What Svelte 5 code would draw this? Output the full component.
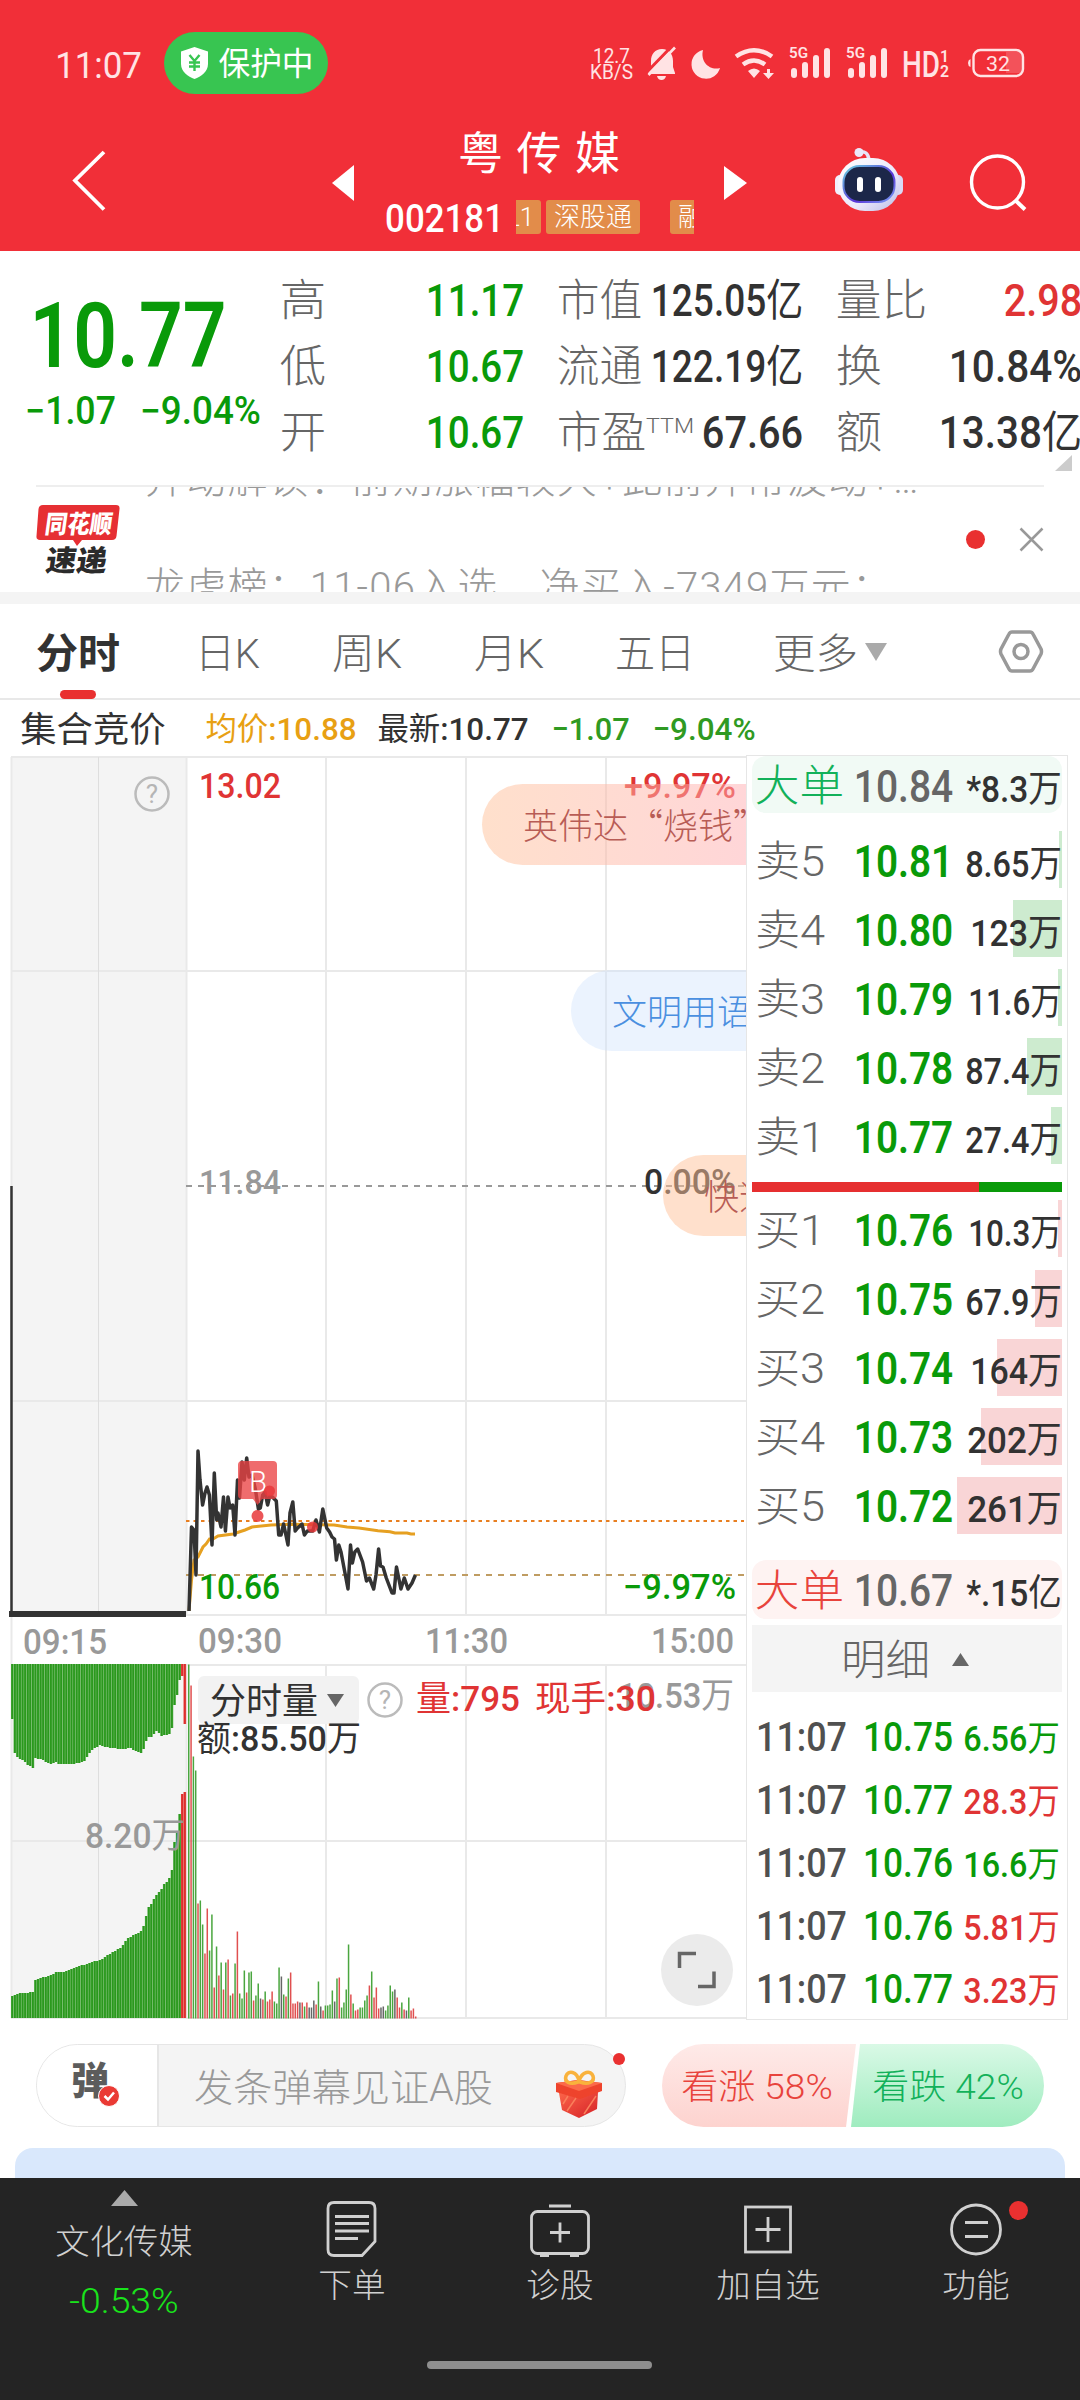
<script lang="ts">
  type Level = { label: string; price: string; qty: string; w: number; bar: number };

  const stats = [
    [
      { label: "高", lw: 42, value: "11.17", w: 94, cls: "green" },
      { label: "低", lw: 42, value: "10.67", w: 94, cls: "green" },
      { label: "开", lw: 42, value: "10.67", w: 94, cls: "green" }
    ],
    [
      { label: "市值", lw: 81, value: "125.05亿", w: 148, cls: "dark" },
      { label: "流通", lw: 81, value: "122.19亿", w: 148, cls: "dark" },
      { label: "市盈", lw: 85, value: "67.66", w: 97, cls: "dark", sup: "TTM" }
    ],
    [
      { label: "量比", lw: 87, value: "2.98", w: 74, cls: "red" },
      { label: "换", lw: 42, value: "10.84%", w: 129, cls: "dark" },
      { label: "额", lw: 42, value: "13.38亿", w: 139, cls: "dark" }
    ]
  ];

  const tabs = [
    { name: "分时", w: 80 },
    { name: "日K", w: 61 },
    { name: "周K", w: 66 },
    { name: "月K", w: 66 },
    { name: "五日", w: 76 },
    { name: "更多", w: 81 }
  ];
  let active = "分时";

  const sells: Level[] = [
    { label: "卖5", price: "10.81", qty: "8.65万", w: 93, bar: 3 },
    { label: "卖4", price: "10.80", qty: "123万", w: 88, bar: 49 },
    { label: "卖3", price: "10.79", qty: "11.6万", w: 90, bar: 4 },
    { label: "卖2", price: "10.78", qty: "87.4万", w: 93, bar: 35 },
    { label: "卖1", price: "10.77", qty: "27.4万", w: 93, bar: 11 }
  ];
  const buys: Level[] = [
    { label: "买1", price: "10.76", qty: "10.3万", w: 90, bar: 4 },
    { label: "买2", price: "10.75", qty: "67.9万", w: 93, bar: 27 },
    { label: "买3", price: "10.74", qty: "164万", w: 88, bar: 65 },
    { label: "买4", price: "10.73", qty: "202万", w: 91, bar: 81 },
    { label: "买5", price: "10.72", qty: "261万", w: 91, bar: 105 }
  ];
  const trades = [
    { price: "10.75", qty: "6.56万", cls: "green" },
    { price: "10.77", qty: "28.3万", cls: "red" },
    { price: "10.76", qty: "16.6万", cls: "green" },
    { price: "10.76", qty: "5.81万", cls: "red" },
    { price: "10.77", qty: "3.23万", cls: "red" }
  ];

  const priceLine =
    "189,1611 191.5,1527 194,1530 196,1575 198,1451 200,1480 202.6,1505 205,1493 207,1487 209.4,1495 212,1545 214.3,1473 216.7,1520 218,1513 221,1527 223.5,1497 225.4,1531 228,1497 230,1508 232.7,1505 235,1535 237.5,1480 239.5,1498 242,1462 244.3,1480 246.7,1458 249,1477 252,1475 255.5,1490 258.4,1509 260.3,1508 262.7,1495 265,1492 267.6,1505 269.5,1497 272.4,1497 276.3,1501 278.7,1535 281,1535 283.6,1524 288,1545 290,1513 292.8,1502 295.2,1531 297.6,1528 302,1524 304.4,1535 307.3,1531 312.7,1531 316,1520 319.4,1532 322.8,1509 326.7,1528 329.6,1532 332,1537 334.5,1539 336.4,1560 338.8,1545 341,1552 348,1589 350.5,1545 352.4,1563 354.8,1552 357.7,1549 362.6,1562 366.5,1581 369.4,1578 373.7,1589 376,1575 378.6,1549 380.5,1566 383,1567 386.3,1578 392,1593 394,1593 396.5,1567 400.9,1589 404.3,1578 408,1589 412,1583 415.4,1575";
  const avgLine =
    "189,1611 191.5,1580 194,1560 198,1557 203,1547 206,1544 209.5,1539 213,1539 218,1536 233,1534 245,1530 252,1527 271,1525 291,1524.3 334,1525 347,1527 359,1528 378,1530.7 390,1531.7 395,1533 407,1533 411,1534 415,1534";

  // call auction volume: [x, y] outlines, upper half hangs from the top
  const upper = [[11, 1703], [14, 1752], [17, 1757], [22, 1760], [28, 1765], [32.5, 1768], [35, 1758], [40, 1759], [46, 1762], [51, 1764], [56, 1762], [59, 1764], [70, 1764], [80, 1763], [85, 1760], [88, 1755], [91, 1750], [95.5, 1748], [99, 1745], [104, 1747], [121, 1749], [131, 1748], [133, 1750], [141, 1753], [144.5, 1747], [147, 1737], [152, 1737], [155, 1731], [158, 1732], [161, 1736], [170, 1734], [172, 1727], [174.5, 1702], [177.5, 1693], [180, 1676], [182, 1676], [185, 1733]];
  const lower = [[11, 1996], [17, 1994], [22, 1993], [33, 1992], [34, 1981], [41, 1978], [53, 1974], [56, 1972], [63, 1972], [70, 1969], [80, 1966], [92, 1962], [102, 1959], [111, 1953], [121, 1947], [128, 1938], [133, 1935], [140, 1932], [144, 1925], [145.5, 1918], [148, 1907], [152, 1903], [154, 1898], [157.5, 1893], [161, 1890], [164, 1884], [167, 1881], [170, 1877], [172, 1868], [174.5, 1839], [177.5, 1830], [180, 1808], [182, 1794], [185, 1792]];

  function at(line: number[][], x: number) {
    let i = 1;
    while (i < line.length - 1 && line[i][0] < x) i++;
    const [x0, y0] = line[i - 1];
    const [x1, y1] = line[i];
    return y0 + ((y1 - y0) * (x - x0)) / (x1 - x0);
  }

  const auction = Array.from({ length: 68 }, (_, i) => {
    const x = 11 + i * 2.575;
    return { x, top: Math.round(at(upper, x + 1)), bottom: Math.round(at(lower, x + 1)), red: i > 65 };
  });

  // per minute volume: colour and height
  const minutes =
    "g354 r333 g262 g248 r115 g118 g94 r65 r110 g68 g104 r31 g72 r43 g56 r29 g56 r59 g23 r25 g55 r87 g25 g20 g48 r26 g46 g47 r18 g23 g35 k20 r19 g27 r17 r19 r27 g17 g15 g51 k42 g24 r22 g40 r46 r15 r15 r17 k16 r16 g12 r16 k11 k11 k18 r14 g37 k12 r8 g13 g13 g14 g28 k17 g40 r41 g11 g16 g29 g74 r24 g15 r8 r9 g11 g11 g18 g23 r33 g47 r21 r31 r10 k11 k12 g8 g13 g33 g27 k29 r21 r11 g16 r9 k8 g21 r8 r10 r2"
      .split(" ")
      .map((m, i) => ({ c: m[0], h: +m.slice(1), x: 188 + i * 2.316 }));
  const fills: Record<string, string> = { g: "#4aa63f", r: "#e05050", k: "#666666" };

  const bars = [
    { x: 790, n: "a" },
    { x: 847, n: "b" }
  ];

  // hanzi next to bold figures stay in the regular weight
  function split(text: string) {
    const parts = text.match(/[\u4e00-\u9fff]+|[^\u4e00-\u9fff]+/g) ?? [];
    return parts.map((s) => ({ s, han: parts.length > 1 && s >= "\u4e00" }));
  }
</script>

{#snippet runs(text: string)}{#each split(text) as p}<tspan class:han={p.han}>{p.s}</tspan>{/each}{/snippet}

{#snippet fit(text: string, w: number, size: number, cls: string)}
  <svg class="fit {cls}" width={w} height={size}>
    <text
      x={-0.05 * size}
      y={size * 0.855 + 1}
      font-size={size}
      textLength={w + 0.1 * size}
      lengthAdjust="spacingAndGlyphs">{@render runs(text)}</text
    >
  </svg>
{/snippet}

{#snippet label(text: string, x: number, y: number, w: number, cls: string, size: number = 35)}
  <text {x} {y} class={cls} font-size={size} textLength={w} lengthAdjust="spacingAndGlyphs">{@render runs(text)}</text>
{/snippet}

{#snippet level(row: Level, side: string)}
  <div class="level">
    <i class={side} style="width: {row.bar}px"></i>
    <span class="l">{@render fit(row.label, 66, 42, "grey light")}</span>
    <span class="p">{@render fit(row.price, 95, 44, "green bold")}</span>
    <span class="q">{@render fit(row.qty, row.w, 37, "dark mid")}</span>
  </div>
{/snippet}

<div class="page">
  <header>
    <div class="status">
      {@render fit("11:07", 83, 37, "pale")}
      <div class="guard">
        <svg width="29" height="32" viewBox="0 0 29 32">
          <path d="M14.5 0L28 4.500V17c0 8-7 12.500-13.500 15C8 29.500 1 25 1 17V4.500z" fill="#fff" />
          <path d="M9.500 8l5 6 5-6M14.500 14v10M9 15.500h11M9 19.500h11" stroke="#38c551" stroke-width="2.400" fill="none" />
        </svg>
        {@render fit("保护中", 92, 32, "white")}
      </div>
      <svg class="signals" width="446" height="50" viewBox="584 38 446 50" fill="#ffe3e4">
        <g class="pale">
          {@render label("12.7", 593, 63, 37, "", 21)}
          {@render label("KB/S", 590, 79, 43, "", 20)}
        </g>
        <path d="M662 49c7 0 11 5 11 12v6l2 6v1h-27v-1l3-6v-6c0-7 4-12 11-12zM657 76h9q-1 4-4.500 4t-4.500-4z" />
        <path d="M645 74L674 44" stroke="#f12f38" stroke-width="3" />
        <path d="M648.500 75L675 47.500" stroke="#ffe3e4" stroke-width="2.600" />
        <path d="M703 50a14.500 14.500 0 1 0 17 18c-10 3-20-6-17-18z" />
        <g fill="none" stroke="#ffe3e4" stroke-width="4.500">
          <path d="M736 56.500q18-12.500 36 0" />
          <path d="M743 64.500q11-8 22 0" />
        </g>
        <path d="M748 71q6-5 12 0l-6 7zM767 69h3v4h4l-5.500 6-5.500-6h4z" />
        {#each bars as b (b.n)}
          {@render label("5G", b.x - 1, 58, 19, "bold", 14)}
          <rect x={b.x + 1} y="68" width="6" height="10" rx="3" />
          <rect x={b.x + 12} y="62" width="6" height="16" rx="3" />
          <rect x={b.x + 23} y="55" width="6" height="23" rx="3" />
          <rect x={b.x + 34} y="48" width="6" height="30" rx="3" />
        {/each}
        {@render label("HD", 902, 77, 38, "mid", 36)}
        {@render label("1", 940, 62, 9, "bold", 17)}
        {@render label("2", 940, 77, 9, "bold", 17)}
        <path d="M1006 52h14q3 0 3 3v15q0 3-3 3h-14z" opacity=".2" />
        <rect x="973.500" y="50" width="49.500" height="26" rx="7" fill="none" stroke="#ffe3e4" stroke-width="2.400" />
        <path d="M970.500 59v8q-2.500-1-2.500-4t2.500-4z" />
        {@render label("32", 986, 71, 24, "", 21)}
      </svg>
    </div>

    <div class="title">
      <div class="back">
        <svg width="36" height="62" viewBox="0 0 36 62">
          <path d="M32 2L3 30.500 32 59.500" fill="none" stroke="#fff" stroke-width="3.800" />
        </svg>
      </div>
      <svg width="22" height="36"><path d="M22 0v36L0 18z" fill="#fff" /></svg>
      <div class="name">
        <h1>粤传媒</h1>
        <div class="code">
          {@render fit("002181", 115, 39, "white mid")}
          <div class="tags">
            <span class="first">L1</span>
            <span>深股通</span>
            <span class="last">融资融券</span>
          </div>
        </div>
      </div>
      <svg width="23" height="34"><path d="M0 0v34l23-17z" fill="#fff" /></svg>
      <svg class="robot" width="70" height="66" viewBox="0 0 70 66">
        <defs>
          <linearGradient id="shell" x1="0" y1="0" x2="1" y2="1">
            <stop offset="0" stop-color="#fff" />
            <stop offset=".6" stop-color="#ebe9fb" />
            <stop offset="1" stop-color="#b9bbe6" />
          </linearGradient>
          <linearGradient id="rim" x1="0" y1="0" x2="1" y2="1">
            <stop offset="0" stop-color="#69d4e0" />
            <stop offset=".6" stop-color="#5a35d8" />
            <stop offset="1" stop-color="#7ba4f5" />
          </linearGradient>
        </defs>
        <path d="M25 5q9-2 10 8" fill="none" stroke="#e6e3f7" stroke-width="3.500" />
        <circle cx="25" cy="5.500" r="4.500" fill="#ebe8fa" />
        <rect x="1" y="28" width="10" height="20" rx="5" fill="#f1effc" />
        <rect x="59" y="28" width="10" height="20" rx="5" fill="#d9d9f5" />
        <rect x="4" y="11" width="62" height="53" rx="27" fill="url(#shell)" />
        <rect x="9.500" y="19" width="51" height="36" rx="16" fill="#1c2749" stroke="url(#rim)" stroke-width="2" />
        <rect x="23" y="30" width="6" height="15" rx="3" fill="#fff" />
        <rect x="41" y="30" width="6" height="15" rx="3" fill="#fff" />
      </svg>
      <svg class="search" width="60" height="58" viewBox="0 0 60 58" fill="none" stroke="#fff">
        <circle cx="28.500" cy="28" r="26" stroke-width="3.400" />
        <path d="M46 46l10 9.500" stroke-width="4" />
      </svg>
    </div>
  </header>

  <section class="quote">
    <div class="last-price">
      {@render fit("10.77", 188, 90, "green bold")}
      <div class="change">
        {@render fit("−1.07", 87, 38, "green mid")}
        {@render fit("−9.04%", 117, 38, "green mid")}
      </div>
    </div>
    {#each stats as col}
      <div class="stat-col">
        {#each col as s}
          <div class="stat">
            {@render fit(s.label, s.lw, 44, "grey light")}
            {#if s.sup}<span class="sup">{@render fit(s.sup, 46, 21, "grey light")}</span>{/if}
            <span class="v">{@render fit(s.value, s.w, 44, s.cls + " mid")}</span>
          </div>
        {/each}
      </div>
    {/each}
    <svg class="corner" width="17" height="16"><path d="M17 0v16H0z" fill="#ccc" /></svg>
  </section>

  <section class="news">
    <svg width="84" height="70" viewBox="0 0 84 70">
      <path d="M7 0h73q4 0 3.500 4l-3 27q-.5 4-4.500 4H46l-5 6-4-6H4q-4 0-3.500-4l2-27q.5-4 4.500-4z" fill="#e62f33" />
      <g transform="skewX(-8)">
        <text x="12" y="28" font-size="25" textLength="67" lengthAdjust="spacingAndGlyphs" class="black" fill="#fff">同花顺</text>
        <text x="18" y="66" font-size="29" textLength="61" lengthAdjust="spacingAndGlyphs" class="black" fill="#2b2b2b">速递</text>
      </g>
    </svg>
    <div class="ticker">
      <p>异动解读：前期涨幅较大+此前异常波动+…</p>
      <p class="next">龙虎榜：11-06入选，净买入-7349万元；</p>
    </div>
    <i class="dot"></i>
    <svg width="25" height="25" viewBox="0 0 25 25"><path d="M1.500 1.500l22 22M23.500 1.500l-22 22" stroke="#999" stroke-width="2.500" /></svg>
  </section>

  <nav class="tabs">
    {#each tabs as t}
      <div class="tab">
        {@render fit(t.name, t.w, 41, t.name == active ? "dark bold" : "grey light")}
        {#if t.name == active}<i></i>{/if}
        {#if t.name == "更多"}<svg class="more" width="22" height="18"><path d="M0 0h22L11 18z" fill="#aaa" /></svg>{/if}
      </div>
    {/each}
    <svg width="46" height="43" viewBox="0 0 46 43" fill="none" stroke="#999">
      <path d="M14 2h18q2 0 3 2l8 15q1 2.500 0 5l-8 15q-1 2-3 2H14q-2 0-3-2L3 24q-1-2.500 0-5l8-15q1-2 3-2z" stroke-width="3.500" />
      <circle cx="23" cy="21.500" r="7" stroke-width="3.500" />
    </svg>
  </nav>

  <div class="info">
    {@render fit("集合竞价", 142, 35, "dark")}
    {@render fit("均价:10.88", 148, 32, "amber mid i1")}
    {@render fit("最新:10.77", 148, 32, "dark mid i2")}
    {@render fit("−1.07", 75, 32, "leaf mid i3")}
    {@render fit("−9.04%", 100, 32, "leaf mid i3")}
  </div>

  <main>
    <div class="chart">
      <svg width="746" height="1265" viewBox="0 755 746 1265">
        <g fill="#f4f4f4">
          <rect x="11" y="757" width="175" height="858" />
          <rect x="11" y="1664" width="175" height="354" />
        </g>
        <g stroke="#e9e9e9" stroke-width="2" fill="none">
          <path d="M11 757H746M11 971H746M11 1401H746M11 1615H746" />
          <path d="M11 1665H746M11 1841H746M11 2018H746" />
          <path d="M186.500 757V1615M326 757V1615M466 757V1615M606 757V1615" />
          <path d="M186.500 1664V2018M326 1664V2018M466 1664V2018M606 1664V2018M11.500 757V2018" />
          <path d="M98.500 757V1615M98.500 1664V2018" stroke="#dedede" stroke-width="1" />
        </g>
        <path d="M186 1186H746" stroke="#999" stroke-width="2" stroke-dasharray="6 6" />
        {@render label("13.02", 199, 798, 82, "red mid")}
        {@render label("+9.97%", 624, 798, 112, "red mid")}
        {@render label("11.84", 199, 1194, 82, "ash mid", 34)}
        {@render label("0.00%", 644, 1194, 92, "dark mid")}
        <g class="help">
          <circle cx="152" cy="794" r="16.500" />
          <text x="152" y="803" text-anchor="middle" font-size="26">?</text>
        </g>

        <path d="M11.500 1186V1614" stroke="#333" stroke-width="2.500" />
        <path d="M9 1614H186" stroke="#333" stroke-width="6" />
        <path d="M186 1521H744" stroke="#e87f21" stroke-width="2" stroke-dasharray="3.500 4" />
        <path d="M186 1575H744" stroke="#bf9c62" stroke-width="2" stroke-dasharray="6 6" />
        <polyline points={avgLine} fill="none" stroke="#e6a021" stroke-width="3" />
        <polyline points={priceLine} fill="none" stroke="#333" stroke-width="3.500" stroke-linejoin="round" />
        <path d="M242 1461h31q4 0 4 4v30q0 4-4 4h-11l-4.500 6-4.500-6h-11q-4 0-4-4v-30q0-4 4-4z" fill="#ea4244" opacity=".78" />
        {@render label("B", 249, 1492, 18, "white light", 30)}
        <g fill="#e8383b" opacity=".85">
          <circle cx="269.500" cy="1491" r="5.500" />
          <circle cx="257.500" cy="1516" r="6" />
          <circle cx="312.500" cy="1527" r="5.500" />
        </g>
        {@render label("10.66", 199, 1599, 81, "green mid")}
        {@render label("−9.97%", 623, 1599, 113, "green mid")}

        {@render label("09:15", 23, 1654, 84, "ash mid")}
        {@render label("09:30", 198, 1653, 84, "ash mid")}
        {@render label("11:30", 425, 1653, 83, "ash mid")}
        {@render label("15:00", 651, 1653, 83, "ash mid")}

        {#each auction as a}
          <rect x={a.x} y="1664" width="2.600" height={a.top - 1664} fill={a.red ? "#e8504e" : "#5cb150"} />
          <rect x={a.x} y={a.bottom} width="2.600" height={2018 - a.bottom} fill={a.red ? "#e8504e" : "#5cb150"} />
          <rect x={a.x + 0.4} y="1664" width="1.700" height={a.top - 1664} fill={a.red ? "#dc2f2d" : "#2a981d"} />
          <rect x={a.x + 0.4} y={a.bottom} width="1.700" height={2018 - a.bottom} fill={a.red ? "#dc2f2d" : "#2a981d"} />
        {/each}
        {#each minutes as m}
          <rect x={m.x} y={2018.5 - m.h} width="1.500" height={m.h} fill={fills[m.c]} />
        {/each}

        <rect x="198" y="1676" width="161" height="48" rx="6" fill="#f2f2f2" />
        {@render label("分时量", 210, 1714, 108, "dark", 36)}
        <path d="M327 1694h17l-8.500 13z" fill="#666" />
        <g class="help">
          <circle cx="385" cy="1700" r="16.500" />
          <text x="385" y="1709" text-anchor="middle" font-size="26">?</text>
        </g>
        {@render label("10.53万", 618, 1708, 116, "ash mid")}
        {@render label("量:795", 416, 1711, 104, "red mid")}
        {@render label("现手:30", 535, 1711, 121, "red mid")}
        {@render label("额:85.50万", 197, 1751, 164, "dark mid")}
        {@render label("8.20万", 85, 1848, 100, "ash mid")}
        <circle cx="697" cy="1970" r="36" fill="#ebebeb" />
        <path d="M679.500 1968V1953.500H696M714 1971.500V1986.500H698" fill="none" stroke="#666" stroke-width="3.500" />
      </svg>
      <div class="bullet b1">英伟达“烧钱”</div>
      <div class="bullet b2">文明用语</div>
      <div class="bullet b3">快速</div>
    </div>

    <div class="book">
      <div class="big up">
        <span class="l">{@render fit("大单", 85, 43, "emerald light")}</span>
        <span class="p">{@render fit("10.84", 95, 44, "grey mid")}</span>
        <span class="q">{@render fit("*8.3万", 92, 37, "dark mid")}</span>
      </div>
      <div class="levels">
        {#each sells as row}{@render level(row, "sell")}{/each}
      </div>
      <div class="ratio"></div>
      <div class="levels">
        {#each buys as row}{@render level(row, "buy")}{/each}
      </div>
      <div class="big down">
        <span class="l">{@render fit("大单", 85, 43, "coral light")}</span>
        <span class="p">{@render fit("10.67", 95, 44, "grey mid")}</span>
        <span class="q">{@render fit("*.15亿", 92, 37, "dark mid")}</span>
      </div>
      <div class="detail">
        {@render fit("明细", 85, 42, "grey light")}
        <svg width="17" height="13"><path d="M8.500 0L17 13H0z" fill="#666" /></svg>
      </div>
      {#each trades as t}
        <div class="trade">
          {@render fit("11:07", 87, 40, "slate mid")}
          {@render fit(t.price, 86, 40, "green mid")}
          <span class="tq">{@render fit(t.qty, 93, 35, "mid " + t.cls)}</span>
        </div>
      {/each}
    </div>
  </main>

  <div class="social">
    <div class="danmu">
      <div class="toggle">
        <span>弹</span>
        <svg width="22" height="22" viewBox="0 0 22 22">
          <circle cx="11" cy="11" r="10.500" fill="#ea3a34" stroke="#fff" />
          <path d="M6.500 11l3.500 3.500 6-7" fill="none" stroke="#fff" stroke-width="2.500" />
        </svg>
      </div>
      <div class="field">
        {@render fit("发条弹幕见证A股", 295, 38, "ash light")}
        <svg width="48" height="50" viewBox="0 0 48 50">
          <defs>
            <linearGradient id="box" x1="0" y1="0" x2="1" y2="1">
              <stop offset="0" stop-color="#ff6b4c" />
              <stop offset="1" stop-color="#d41f26" />
            </linearGradient>
          </defs>
          <path d="M3 19l21 9v21L7 41 4 24zM45 19l-21 9v21l18-9 1-17z" fill="url(#box)" />
          <path d="M1 14l22-3 24 3v8l-22 8L1 23z" fill="#ee432c" />
          <path d="M1 14l22-3 24 3-23 8z" fill="#fb6a49" />
          <path d="M12 42l9-13M29 45l12-18M8 35l5-8" stroke="#fa7f5b" stroke-width="1.500" />
          <path d="M23 13C15 16 9 13 11 7s11-5 13 5c3-10 12-11 14-5s-5 9-13 6z" fill="none" stroke="#f9b23c" stroke-width="3.600" />
        </svg>
      </div>
      <i class="dot"></i>
    </div>
    <div class="vote">
      <div class="bull">{@render fit("看涨 58%", 148, 35, "coral light")}</div>
      <div class="bear">{@render fit("看跌 42%", 148, 35, "emerald light")}</div>
    </div>
  </div>

  <div class="banner"></div>

  <footer>
    <div class="index">
      <svg width="27" height="16"><path d="M13.500 0L27 16H0z" fill="#aaa" /></svg>
      {@render fit("文化传媒", 134, 34, "mist light")}
      {@render fit("-0.53%", 106, 35, "lime light")}
    </div>
    <div class="item">
      <svg width="60" height="56" viewBox="0 0 60 56">
        <path d="M12 1.500h35q6 0 6 6v33L40 54.500H12q-6 0-6-6v-41q0-6 6-6z" />
        <path d="M13 15.500h34M13 22.500h34M13 30h34M13 37.500h23" />
      </svg>
      {@render fit("下单", 64, 33, "mist light")}
    </div>
    <div class="item">
      <svg width="60" height="56" viewBox="0 0 60 56">
        <rect x="1.500" y="10.500" width="57" height="42" rx="6" />
        <path d="M19 5h22M20 31.500h20M30 21.500v20M10 54.500h9M40 54.500h9" />
      </svg>
      {@render fit("诊股", 64, 33, "mist light")}
    </div>
    <div class="item">
      <svg width="60" height="56" viewBox="0 0 60 56">
        <rect x="7.500" y="6" width="45" height="45" />
        <path d="M17.500 28.500h25M30 16v25" />
      </svg>
      {@render fit("加自选", 100, 33, "mist light")}
    </div>
    <div class="item">
      <svg width="60" height="56" viewBox="0 0 60 56">
        <circle cx="30" cy="28.500" r="24.500" />
        <path d="M19 21.500h23M19 35.500h23" />
      </svg>
      {@render fit("功能", 64, 33, "mist light")}
      <i class="dot"></i>
    </div>
    <div class="home"></div>
  </footer>
</div>

<style>
  .page {
    width: 1080px;
    height: 2400px;
    overflow: hidden;
    display: flex;
    flex-direction: column;
    background: #fff;
    font-family: Roboto, "Noto Sans CJK SC", sans-serif;
  }

  .page * {
    box-sizing: border-box;
  }

  svg {
    display: block;
    flex: none;
  }

  .fit {
    overflow: visible;
  }

  .light {
    font-weight: 300;
  }
  .mid {
    font-weight: 500;
  }
  .bold {
    font-weight: 600;
  }
  .black {
    font-weight: 900;
  }
  .mid .han {
    font-weight: 400;
  }

  .white {
    fill: #fff;
  }
  .pale {
    fill: #ffe3e4;
  }
  .green {
    fill: #099a09;
  }
  .leaf {
    fill: #2f9a22;
  }
  .emerald {
    fill: #12b15a;
  }
  .lime {
    fill: #19e41b;
  }
  .red {
    fill: #e03434;
  }
  .coral {
    fill: #e8433c;
  }
  .amber {
    fill: #e8a013;
  }
  .dark {
    fill: #323232;
  }
  .slate {
    fill: #505050;
  }
  .grey {
    fill: #666;
  }
  .ash {
    fill: #999;
  }
  .mist {
    fill: #d0d0d0;
  }

  .dot {
    width: 19px;
    height: 19px;
    border-radius: 50%;
    background: #e93030;
  }

  header {
    height: 251px;
    flex: none;
    background: #f12f38;
  }

  .status {
    height: 115px;
    padding: 11px 50px 0 57px;
    display: flex;
    align-items: center;
  }

  .guard {
    width: 164px;
    height: 62px;
    margin-left: 24px;
    padding-left: 16px;
    display: flex;
    align-items: center;
    gap: 11px;
    border-radius: 31px;
    background: #38c551;
  }

  .signals {
    margin-left: auto;
  }

  .title {
    height: 136px;
    display: flex;
    align-items: center;
  }

  .back {
    width: 332px;
    padding-left: 72px;
    position: relative;
    top: -2px;
  }

  .name {
    width: 370px;
    height: 136px;
    padding: 17px 0 0 33px;
  }

  h1 {
    margin: 0 0 23px 71px;
    font-size: 45px;
    line-height: 45px;
    font-weight: 400;
    letter-spacing: 13.5px;
    color: #fff;
  }

  .code {
    display: flex;
    align-items: center;
    height: 34px;
  }

  .tags {
    width: 178px;
    margin-left: 14px;
    display: flex;
    overflow: hidden;
  }

  .tags span {
    flex: none;
    width: 94px;
    height: 34px;
    padding-left: 8px;
    border-radius: 3px;
    background: #e28c4a;
    color: #fff;
    font-size: 26px;
    line-height: 34px;
    font-weight: 300;
    white-space: nowrap;
  }

  .tags .first {
    width: 40px;
    margin: 0 5px 0 -15px;
    padding-left: 5px;
  }

  .tags .last {
    margin-left: 30px;
  }

  .robot {
    margin-left: 87px;
    position: relative;
    top: -3px;
  }

  .search {
    margin-left: 65px;
  }

  .quote {
    position: relative;
    height: 234px;
    flex: none;
    padding-top: 15px;
    display: grid;
    grid-template-columns: 245px 240px 242px 242px;
    column-gap: 37px;
  }

  .last-price {
    padding: 23px 0 0 34px;
  }

  .change {
    display: flex;
    gap: 28px;
    margin: 11px 0 0 -7px;
  }

  .stat {
    height: 66px;
    display: flex;
    align-items: center;
  }

  .sup {
    margin: -14px 0 0 3px;
  }

  .v {
    margin-left: auto;
  }

  .corner {
    position: absolute;
    right: 8px;
    bottom: 14px;
  }

  .news {
    height: 107px;
    flex: none;
    margin: 0 36px;
    border-top: 2px solid #eee;
    display: flex;
    align-items: center;
    overflow: hidden;
  }

  .ticker {
    width: 797px;
    height: 107px;
    margin-left: 25px;
    overflow: hidden;
  }

  .ticker p {
    margin: -36px 0 0;
    font-size: 40px;
    line-height: 60px;
    font-weight: 300;
    letter-spacing: 1.2px;
    color: #999;
    white-space: nowrap;
  }

  .ticker .next {
    margin-top: 48px;
  }

  .news .dot {
    margin: 0 34px 0 25px;
  }

  .tabs {
    height: 108px;
    flex: none;
    padding: 0 36px 0 38px;
    border-top: 12px solid #f4f4f4;
    border-bottom: 2px solid #e8e8e8;
    display: grid;
    grid-template-columns: 159px 137px 142px 141px 158px 223px 46px;
    align-items: center;
  }

  .tab {
    position: relative;
    height: 94px;
    padding-top: 2px;
    display: flex;
    align-items: center;
  }

  .tab i {
    position: absolute;
    left: 22px;
    bottom: -1px;
    width: 36px;
    height: 9px;
    border-radius: 5px;
    background: #e93030;
  }

  .more {
    margin-left: 9px;
  }

  .info {
    height: 55px;
    flex: none;
    padding: 1px 0 0 22px;
    display: flex;
    align-items: center;
  }

  .i1 {
    margin-left: 43px;
  }
  .i2 {
    margin-left: 24px;
  }
  .i3 {
    margin-left: 26px;
  }

  main {
    height: 1265px;
    flex: none;
    display: flex;
  }

  .chart {
    position: relative;
    width: 746px;
    overflow: hidden;
  }

  .help circle {
    fill: none;
    stroke: #bbb;
    stroke-width: 2.5;
  }

  .help text {
    fill: #b5b5b5;
  }

  .bullet {
    position: absolute;
    right: 0;
    height: 81px;
    padding-left: 41px;
    border-radius: 41px 0 0 41px;
    font-family: "Noto Sans CJK SC", sans-serif;
    font-size: 35px;
    line-height: 80px;
    font-weight: 300;
    white-space: nowrap;
    overflow: hidden;
  }

  .b1 {
    top: 29px;
    left: 482px;
    background: linear-gradient(90deg, rgba(255, 193, 153, 0.5), rgba(255, 173, 177, 0.5));
    color: #b85c55;
  }

  .b2 {
    top: 215px;
    left: 571px;
    background: rgba(205, 225, 253, 0.4);
    color: #4a8fe0;
  }

  .b3 {
    top: 400px;
    left: 663px;
    background: rgba(255, 193, 153, 0.5);
    color: #b85c55;
  }

  .book {
    width: 322px;
    height: 1265px;
    padding: 0 5px;
    border: 1px solid #e6e6e6;
    overflow: hidden;
  }

  .big {
    height: 57px;
    border-radius: 14px;
    display: flex;
    align-items: center;
  }

  .big.up {
    background: #f1faf5;
    margin-bottom: 12px;
  }

  .big.down {
    height: 59px;
    margin: 20px 0 6px;
    background: #fef3f2;
  }

  .l {
    width: 104px;
    padding-left: 5px;
  }

  .q {
    margin: 5px 2px 0 auto;
  }

  .level {
    position: relative;
    height: 69.1px;
    display: flex;
    align-items: center;
  }

  .level i {
    position: absolute;
    right: 0;
    top: 6px;
    height: 57px;
  }

  .level span {
    position: relative;
  }

  .sell {
    background: #cdebcf;
  }

  .buy {
    background: #f9d5d6;
  }

  .ratio {
    height: 10px;
    margin: 12px 0 2px;
    background: linear-gradient(90deg, #e62f30 227px, #099a09 227px);
  }

  .detail {
    height: 67px;
    margin-bottom: 13px;
    padding: 2px 0 0 91px;
    display: flex;
    align-items: center;
    gap: 24px;
    background: #f4f4f4;
  }

  .trade {
    height: 63px;
    padding: 0 3px 0 6px;
    display: grid;
    grid-template-columns: 107px 100px 93px;
    align-items: center;
  }

  .tq {
    padding-top: 3px;
  }

  .social {
    flex: none;
    height: 83px;
    margin: 24px 36px 21px;
    display: flex;
    justify-content: space-between;
  }

  .danmu {
    position: relative;
    width: 590px;
    display: flex;
    border: 1px solid #e6e6e6;
    border-radius: 42px;
    background: #f4f4f4;
  }

  .danmu .dot {
    position: absolute;
    right: 0;
    top: 8px;
    width: 12px;
    height: 12px;
  }

  .toggle {
    position: relative;
    width: 122px;
    border-right: 2px solid #e6e6e6;
    border-radius: 41px 0 0 41px;
    background: #fff;
  }

  .toggle span {
    position: absolute;
    left: 34px;
    top: 8px;
    font-size: 38px;
    line-height: 56px;
    font-weight: 900;
    color: #5c5c5c;
  }

  .toggle svg {
    position: absolute;
    left: 61px;
    top: 40px;
  }

  .field {
    flex: 1;
    padding: 0 22px 0 37px;
    display: flex;
    align-items: center;
    justify-content: space-between;
  }

  .field svg:last-child {
    margin-top: 16px;
  }

  .vote {
    width: 382px;
    display: flex;
    border-radius: 42px;
    overflow: hidden;
  }

  .bull,
  .bear {
    display: flex;
    align-items: center;
  }

  .bull {
    width: 194px;
    padding-left: 21px;
    background: linear-gradient(#feeae8, #fdd3cf);
    clip-path: polygon(0 0, 100% 0, calc(100% - 10px) 100%, 0 100%);
  }

  .bear {
    width: 193px;
    margin-left: -5px;
    padding-left: 23px;
    background: linear-gradient(#d9f9e6, #9fecbf);
    clip-path: polygon(9px 0, 100% 0, 100% 100%, 0 100%);
  }

  .banner {
    flex: none;
    height: 30px;
    margin: 0 15px;
    border-radius: 18px 18px 0 0;
    background: #d9e8fc;
  }

  footer {
    position: relative;
    flex: 1;
    padding-left: 20px;
    display: grid;
    grid-template-columns: 228px 208px 208px 208px 208px;
    background: #242424;
  }

  .index,
  .item {
    position: relative;
    display: flex;
    flex-direction: column;
    align-items: center;
  }

  .index {
    width: 208px;
    padding-top: 12px;
    gap: 18px;
  }

  .index :global(svg:last-child) {
    margin-top: 6px;
  }

  .item {
    padding-top: 23px;
    gap: 11px;
  }

  .item > svg:first-child {
    fill: none;
    stroke: #d0d0d0;
    stroke-width: 2.8;
  }

  .item .dot {
    position: absolute;
    left: 137px;
    top: 23px;
  }

  .home {
    position: absolute;
    left: 427px;
    bottom: 31px;
    width: 225px;
    height: 8px;
    border-radius: 4px;
    background: #8f8f8f;
  }
</style>
